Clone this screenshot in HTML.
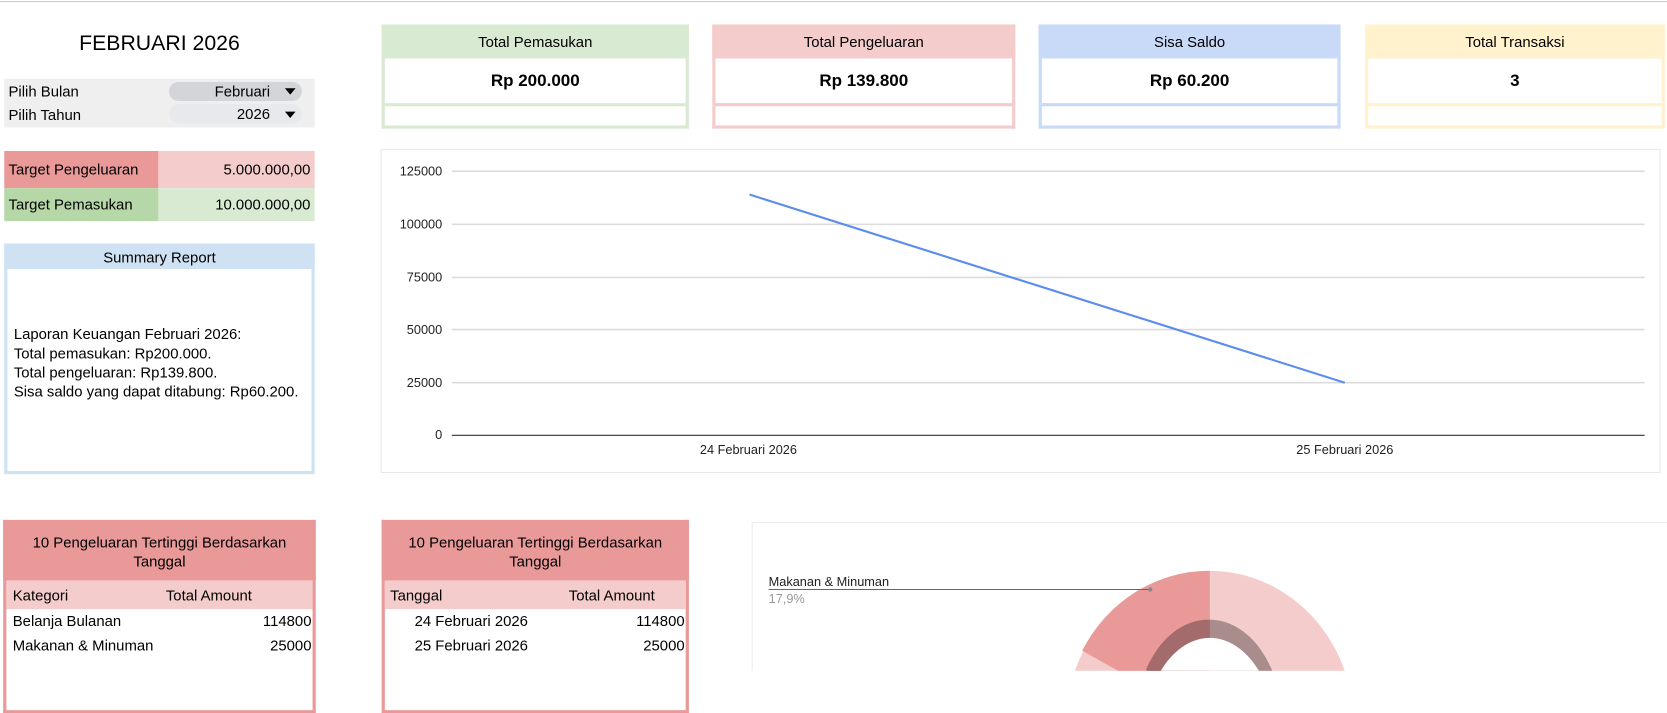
<!DOCTYPE html>
<html><head><style>
html,body{margin:0;width:1667px;height:671px;overflow:hidden;background:#fff}
#w{position:absolute;left:0;top:0;width:1568px;height:631px;transform:scale(1.0631);transform-origin:0 0;font-family:"Liberation Sans",Arial,sans-serif;color:#000}
.a{position:absolute}
.card{position:absolute;top:23px;height:98px;box-sizing:border-box;border:3px solid;border-top:0}
.card .h{height:32px;line-height:32px;text-align:center;font-size:14px;margin:0 -3px}
.card .v{height:40px;line-height:40px;text-align:center;font-weight:bold;font-size:16px;border-bottom:3px solid}
.t{font-size:14px}
</style></head><body><div id="w">
<div class="a" style="left:0;top:1px;width:1568px;height:1px;background:#c8c8c8"></div>
<div class="a" style="left:0;top:30px;width:300px;text-align:center;font-size:20px">FEBRUARI 2026</div>
<div class="a" style="left:4px;top:74px;width:292px;height:46px;background:#efefef"></div>
<div class="a t" style="left:8px;top:78px">Pilih Bulan</div>
<div class="a t" style="left:8px;top:100px">Pilih Tahun</div>
<div class="a t" style="left:159px;top:77px;width:125px;height:18px;border-radius:9px;background:#d4d5d8;line-height:18px;text-align:right"><span style="padding-right:30px">Februari</span></div>
<div class="a" style="left:268px;top:83px;border-left:5px solid transparent;border-right:5px solid transparent;border-top:6px solid #000"></div>
<div class="a t" style="left:159px;top:98px;width:125px;height:18px;border-radius:9px;background:#e8e9ec;line-height:18px;text-align:right"><span style="padding-right:30px">2026</span></div>
<div class="a" style="left:268px;top:105px;border-left:5px solid transparent;border-right:5px solid transparent;border-top:6px solid #000"></div>

<div class="a t" style="left:4px;top:142px;width:145px;height:35px;background:#ea9999;line-height:35px;padding-left:4px;box-sizing:border-box">Target Pengeluaran</div>
<div class="a t" style="left:149px;top:142px;width:147px;height:35px;background:#f4cccc;line-height:35px;text-align:right;padding-right:4px;box-sizing:border-box">5.000.000,00</div>
<div class="a t" style="left:4px;top:177px;width:145px;height:31px;background:#b6d7a8;line-height:31px;padding-left:4px;box-sizing:border-box">Target Pemasukan</div>
<div class="a t" style="left:149px;top:177px;width:147px;height:31px;background:#d9ead3;line-height:31px;text-align:right;padding-right:4px;box-sizing:border-box">10.000.000,00</div>

<div class="a" style="left:4px;top:229px;width:292px;height:217px;box-sizing:border-box;border:3px solid #cfe2f3;border-top:0">
<div style="height:24px;line-height:26px;background:#cfe2f3;text-align:center;font-size:14px;margin:0 -3px">Summary Report</div>
<div class="t" style="padding:52px 0 0 6px;line-height:18px">Laporan Keuangan Februari 2026:<br>Total pemasukan: Rp200.000.<br>Total pengeluaran: Rp139.800.<br>Sisa saldo yang dapat ditabung: Rp60.200.</div></div>

<div class="card" style="left:359px;width:289px;border-color:#d9ead3"><div class="h" style="background:#d9ead3">Total Pemasukan</div><div class="v" style="border-color:#d9ead3;margin-top:2px">Rp 200.000</div></div>
<div class="card" style="left:670px;width:285px;border-color:#f4cccc"><div class="h" style="background:#f4cccc">Total Pengeluaran</div><div class="v" style="border-color:#f4cccc;margin-top:2px">Rp 139.800</div></div>
<div class="card" style="left:977px;width:284px;border-color:#c9daf8"><div class="h" style="background:#c9daf8">Sisa Saldo</div><div class="v" style="border-color:#c9daf8;margin-top:2px">Rp 60.200</div></div>
<div class="card" style="left:1284px;width:282px;border-color:#fff2cc"><div class="h" style="background:#fff2cc">Total Transaksi</div><div class="v" style="border-color:#fff2cc;margin-top:2px">3</div></div>

<svg class="a" style="left:0;top:0" width="1568" height="631">
<rect x="358.5" y="140.5" width="1203" height="304" fill="none" stroke="#e8e8e8"/>
<g stroke="#dcdcdc" stroke-width="1.5">
<line x1="425" y1="161" x2="1547" y2="161"/><line x1="425" y1="211" x2="1547" y2="211"/>
<line x1="425" y1="261" x2="1547" y2="261"/><line x1="425" y1="310" x2="1547" y2="310"/>
<line x1="425" y1="360" x2="1547" y2="360"/></g>
<line x1="425" y1="409.5" x2="1547" y2="409.5" stroke="#333" stroke-width="1"/>
<g font-size="12" fill="#222" text-anchor="end" font-family="Liberation Sans">
<text x="416" y="165">125000</text><text x="416" y="215">100000</text><text x="416" y="265">75000</text>
<text x="416" y="314">50000</text><text x="416" y="364">25000</text><text x="416" y="413">0</text></g>
<g font-size="12" fill="#222" text-anchor="middle" font-family="Liberation Sans">
<text x="704" y="427">24 Februari 2026</text><text x="1265" y="427">25 Februari 2026</text></g>
<line x1="705" y1="183" x2="1265" y2="360" stroke="#5b8def" stroke-width="2"/>

<rect x="707.5" y="491.5" width="980" height="200" fill="none" stroke="#ececec"/>
<clipPath id="c"><rect x="700" y="480" width="967" height="151"/></clipPath>
<g clip-path="url(#c)">
<ellipse cx="1138" cy="680" rx="135" ry="143" fill="#f4cccc"/>
<path d="M1138 680 L1138 537 A135 143 0 0 0 1018 612 Z" fill="#ea9999"/>
<ellipse cx="1138" cy="680" rx="68" ry="97" fill="#a98c8c"/>
<path d="M1138 680 L1138 583 A68 97 0 0 0 1078 630 Z" fill="#a36b6b"/>
<ellipse cx="1138" cy="697" rx="63" ry="97" fill="#fff"/>
</g>
<line x1="723" y1="554.5" x2="1082" y2="554.5" stroke="#666"/>
<circle cx="1082" cy="554.5" r="2" fill="#888"/>
<text x="723" y="551" font-size="12" fill="#222" font-family="Liberation Sans">Makanan &amp; Minuman</text>
<text x="723" y="567" font-size="12" fill="#999" font-family="Liberation Sans">17,9%</text>
</svg>

<div class="a" style="left:3px;top:489px;width:294px;height:182px;box-sizing:border-box;border:3px solid #ea9999;border-top:0">
<div style="background:#ea9999;height:57px;margin:0 -3px;text-align:center;font-size:14px;padding-top:12px;box-sizing:border-box;line-height:18px">10 Pengeluaran Tertinggi Berdasarkan<br>Tanggal</div>
<div class="t" style="background:#f4cccc;height:27px;line-height:28px;position:relative"><span style="position:absolute;left:6px">Kategori</span><span style="position:absolute;left:150px">Total Amount</span></div>
<div class="t" style="position:relative;height:23px;line-height:23px"><span style="position:absolute;left:6px">Belanja Bulanan</span><span style="position:absolute;right:1px">114800</span></div>
<div class="t" style="position:relative;height:23px;line-height:23px"><span style="position:absolute;left:6px">Makanan &amp; Minuman</span><span style="position:absolute;right:1px">25000</span></div>
</div>
<div class="a" style="left:359px;top:489px;width:289px;height:182px;box-sizing:border-box;border:3px solid #ea9999;border-top:0">
<div style="background:#ea9999;height:57px;margin:0 -3px;text-align:center;font-size:14px;padding-top:12px;box-sizing:border-box;line-height:18px">10 Pengeluaran Tertinggi Berdasarkan<br>Tanggal</div>
<div class="t" style="background:#f4cccc;height:27px;line-height:28px;position:relative"><span style="position:absolute;left:5px">Tanggal</span><span style="position:absolute;left:173px">Total Amount</span></div>
<div class="t" style="position:relative;height:23px;line-height:23px"><span style="position:absolute;left:28px">24 Februari 2026</span><span style="position:absolute;right:1px">114800</span></div>
<div class="t" style="position:relative;height:23px;line-height:23px"><span style="position:absolute;left:28px">25 Februari 2026</span><span style="position:absolute;right:1px">25000</span></div>
</div>
</div></body></html>
